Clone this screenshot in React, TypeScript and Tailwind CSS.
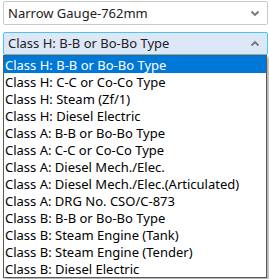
import React from "react";

const items = [
  "Class H: B-B or Bo-Bo Type",
  "Class H: C-C or Co-Co Type",
  "Class H: Steam (Zf/1)",
  "Class H: Diesel Electric",
  "Class A: B-B or Bo-Bo Type",
  "Class A: C-C or Co-Co Type",
  "Class A: Diesel Mech./Elec.",
  "Class A: Diesel Mech./Elec.(Articulated)",
  "Class A: DRG No. CSO/C-873",
  "Class B: B-B or Bo-Bo Type",
  "Class B: Steam Engine (Tank)",
  "Class B: Steam Engine (Tender)",
  "Class B: Diesel Electric",
];

const Chevron = ({ up }: { up?: boolean }) => (
  <svg width="10" height="7" viewBox="0 0 10 7" className="shrink-0">
    <path
      d={up ? "M1.5 5.5 L5 2 L8.5 5.5" : "M1.5 1.5 L5 5 L8.5 1.5"}
      fill="none"
      stroke="#777"
      strokeWidth="1.8"
    />
  </svg>
);

export default function App() {
  return (
    <div
      className="w-[269px] h-[279px] bg-white overflow-hidden relative pt-[1px] pl-[3px] pr-[1px]"
      style={{ fontFamily: '"Noto Sans", "Open Sans", sans-serif' }}
    >
      <div className="h-[24px] border border-[#c8c8c8] rounded-[2px] bg-white flex items-center pl-[4px] pr-[7px] justify-between text-[13px] text-[#222] leading-none">
        <span>Narrow Gauge-762mm</span>
        <Chevron />
      </div>
      <div className="mt-[7px] h-[23px] border border-[#4cc4f0] rounded-[2px] bg-[#dce7f8] flex items-center pl-[4px] pr-[7px] justify-between text-[13px] text-[#222] leading-none">
        <span>Class H: B-B or Bo-Bo Type</span>
        <Chevron up />
      </div>
      <div className="w-[264px] border border-[#5a5a5a] bg-white shadow-[2px_2px_3px_rgba(0,0,0,0.35)] text-[13px] leading-[16px]">
        {items.map((t, i) => (
          <div
            key={t}
            className={
              "h-[17px] pl-[1px] flex items-center whitespace-nowrap " +
              (i === 0 ? "bg-[#0078d7] text-white" : "text-black")
            }
          >
            {t}
          </div>
        ))}
      </div>
    </div>
  );
}
